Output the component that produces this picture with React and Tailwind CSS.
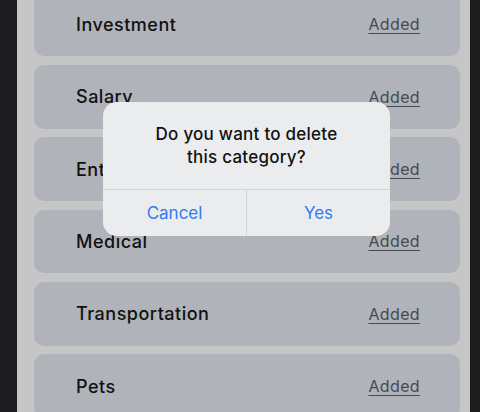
export default function App() {
  const items = ["Investment", "Salary", "Entertainment", "Medical", "Transportation", "Pets"];
  return (
    <div className="relative flex h-[412px] w-[480px] overflow-hidden bg-[#1c1c1e]" style={{ fontFamily: "Inter, 'Noto Sans', sans-serif" }}>
      <div className="w-[17px] shrink-0 bg-[#1c1c1e]" />
      <div className="flex-1 bg-[#c6c6c6] pl-[17px] pr-[10px]">
        <div className="-mt-[7.3px] flex flex-col gap-[8.85px]">
          {items.map((name) => (
            <div key={name} className="flex h-[63.5px] shrink-0 items-center justify-between rounded-[10px] bg-[#b0b3b9] pl-[42px] pr-[40px]">
              <span className="text-[18px] font-medium tracking-[0.5px] text-[#111]">{name}</span>
              <span className="text-[16px] tracking-[0.35px] text-[#474a4f] underline underline-offset-[3px]">Added</span>
            </div>
          ))}
        </div>
      </div>
      <div className="w-[10px] shrink-0 bg-[#1c1c1e]" />
      <div className="absolute left-[103px] top-[102px] flex h-[134px] w-[287px] flex-col overflow-hidden rounded-[14px] bg-[#ebecee]">
        <div className="flex h-[88px] items-center justify-center border-b border-[#d2d3d6] px-4 pt-[1px] text-center">
          <p className="text-[17px] font-medium leading-[23px] tracking-[0.25px] text-[#111]">
            Do you want to delete
            <br />
            this category?
          </p>
        </div>
        <div className="flex flex-1">
          <button className="flex-1 border-r border-[#d2d3d6] pt-[1px] text-[17px] text-[#2f7cf0]">Cancel</button>
          <button className="flex-1 pt-[1px] text-[17px] text-[#2f7cf0]">Yes</button>
        </div>
      </div>
    </div>
  );
}
